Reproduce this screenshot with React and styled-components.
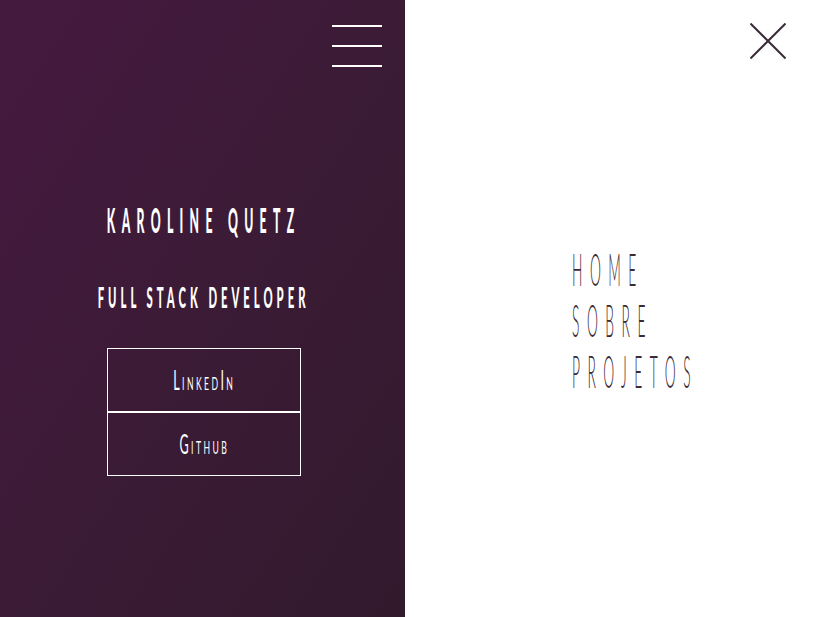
import React from 'react';
import styled, { createGlobalStyle } from 'styled-components';

const Global = createGlobalStyle`
  html, body { margin: 0; padding: 0; height: 100%; }
  body { font-family: Lato, "Open Sans", "Liberation Sans", sans-serif; overflow: hidden; }
  #root { height: 100%; }
`;

const Page = styled.div`
  display: flex;
  height: 100vh;
  width: 100%;
  overflow: hidden;
`;

const Side = styled.aside`
  flex: 0 0 405px;
  width: 405px;
  min-width: 0;
  display: flex;
  flex-direction: column;
  align-items: center;
  overflow: hidden;
  background: linear-gradient(to bottom right, #461a40 0%, #3b1b36 50%, #321a2d 100%);
`;

const SideBar = styled.div`
  align-self: stretch;
  display: flex;
  justify-content: flex-end;
  padding: 25px 23px 0 0;
`;

const Burger = styled.button`
  display: flex;
  flex-direction: column;
  gap: 18px;
  width: 50px;
  padding: 0;
  border: 0;
  background: none;
  cursor: pointer;
`;

const BurgerLine = styled.span`
  display: block;
  height: 2px;
  width: 100%;
  background: #ffffff;
`;

const squeezed = (s, ls, origin = 'center') => `
  white-space: nowrap;
  letter-spacing: ${ls}px;
  transform: scaleX(${s});
  transform-origin: ${origin};
`;

const Title = styled.h1`
  margin: 135px 4px 0 0;
  padding-left: 18px;
  font-family: Lato, "Liberation Sans", sans-serif;
  font-weight: 900;
  font-size: 35px;
  line-height: 35px;
  color: #ffffff;
  ${squeezed(0.35, 18)}
`;

const Subtitle = styled.h2`
  margin: 45px 2px 0 0;
  padding-left: 10.2px;
  font-family: Lato, "Liberation Sans", sans-serif;
  font-weight: 900;
  font-size: 29px;
  line-height: 29px;
  color: #ffffff;
  ${squeezed(0.39, 10.2)}
`;

const Links = styled.div`
  margin: 37px 0 0 2px;
  display: flex;
  flex-direction: column;
`;

const LinkBox = styled.a`
  box-sizing: border-box;
  width: 194px;
  height: 64px;
  border: 1px solid #ffffff;
  display: flex;
  align-items: center;
  justify-content: center;
  text-decoration: none;
  color: #ffffff;
`;

const LinkLabel = styled.span`
  display: inline-block;
  padding-left: 5px;
  font-family: Lato, "Liberation Sans", sans-serif;
  font-weight: 400;
  font-size: 26px;
  line-height: 26px;
  font-variant: small-caps;
  ${squeezed(0.48, 5)}
`;

const Main = styled.main`
  flex: 1 1 0;
  min-width: 0;
  overflow: hidden;
  display: flex;
  flex-direction: column;
  background: #ffffff;
`;

const MainBar = styled.div`
  display: flex;
  justify-content: flex-end;
  padding: 23px 28px 0 0;
`;

const Close = styled.button`
  width: 36px;
  height: 36px;
  padding: 0;
  border: 0;
  background: none;
  cursor: pointer;
  display: block;
  svg { display: block; }
`;

const Nav = styled.nav`
  margin-top: 184px;
  padding-left: 167px;
  display: flex;
  flex-direction: column;
  align-items: flex-start;
`;

const NavItem = styled.a`
  display: block;
  font-family: Lato, "Liberation Sans", sans-serif;
  font-weight: 300;
  font-size: 46px;
  line-height: 51px;
  color: #3a2a36;
  text-decoration: none;
  ${squeezed(0.3, 25, 'left center')}
`;

export default function App() {
  return (
    <>
      <Global />
      <Page>
        <Side>
          <SideBar>
            <Burger aria-label="menu">
              <BurgerLine />
              <BurgerLine />
              <BurgerLine />
            </Burger>
          </SideBar>
          <Title>KAROLINE QUETZ</Title>
          <Subtitle>FULL STACK DEVELOPER</Subtitle>
          <Links>
            <LinkBox href="#">
              <LinkLabel>LinkedIn</LinkLabel>
            </LinkBox>
            <LinkBox href="#">
              <LinkLabel>Github</LinkLabel>
            </LinkBox>
          </Links>
        </Side>
        <Main>
          <MainBar>
            <Close aria-label="fechar">
              <svg width="36" height="36" viewBox="0 0 36 36">
                <path d="M0.5 0.5 L35.5 35.5 M35.5 0.5 L0.5 35.5" stroke="#3b2b37" strokeWidth="2" fill="none" />
              </svg>
            </Close>
          </MainBar>
          <Nav>
            <NavItem href="#">HOME</NavItem>
            <NavItem href="#">SOBRE</NavItem>
            <NavItem href="#">PROJETOS</NavItem>
          </Nav>
        </Main>
      </Page>
    </>
  );
}
